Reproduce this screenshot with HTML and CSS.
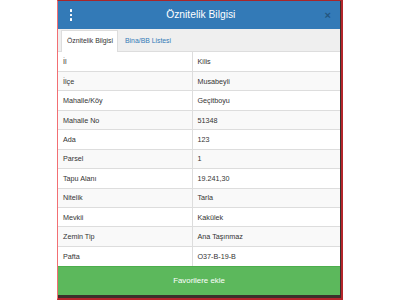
FILE: index.html
```html
<!DOCTYPE html>
<html lang="tr">
<head>
<meta charset="utf-8">
<title>Öznitelik Bilgisi</title>
<link rel="stylesheet" href="styles.css">
</head>
<body>
<div class="frame">
  <div class="modal">
    <div class="modal-header">
      <span class="kebab"><i></i><i></i><i></i></span>
      <h4 class="title">Öznitelik Bilgisi</h4>
      <span class="close">×</span>
    </div>
    <div class="tabs">
      <span class="tab active">Öznitelik Bilgisi</span>
      <span class="tab">Bina/BB Listesi</span>
    </div>
    <table class="attr">
      <tbody>
        <tr><td>İl</td><td>Kilis</td></tr>
        <tr><td>İlçe</td><td>Musabeyli</td></tr>
        <tr><td>Mahalle/Köy</td><td>Geçitboyu</td></tr>
        <tr><td>Mahalle No</td><td>51348</td></tr>
        <tr><td>Ada</td><td>123</td></tr>
        <tr><td>Parsel</td><td>1</td></tr>
        <tr><td>Tapu Alanı</td><td>19.241,30</td></tr>
        <tr><td>Nitelik</td><td>Tarla</td></tr>
        <tr><td>Mevkii</td><td>Kakülek</td></tr>
        <tr><td>Zemin Tip</td><td>Ana Taşınmaz</td></tr>
        <tr><td>Pafta</td><td>O37-B-19-B</td></tr>
      </tbody>
    </table>
    <div class="fav">Favorilere ekle</div>
  </div>
</div>
</body>
</html>
```

FILE: styles.css
```css
html, body {
  margin: 0;
  padding: 0;
  background: #ffffff;
}
body {
  font-family: "Liberation Sans", Arial, sans-serif;
  color: #333333;
}
.frame {
  margin-left: 57px;
  width: 286px;
  height: 300px;
  box-sizing: border-box;
  border-top: 1px solid #a8262a;
  border-right: 2px solid #b3262b;
  border-bottom: 2px solid #b3262b;
  border-left: 1px solid #f26f73;
  background: #3b302b;
}
.modal {
  width: 282px;
  background: #ffffff;
  display: flex;
  flex-direction: column;
}
.modal-header {
  height: 28px;
  background: #337ab7;
  display: flex;
  align-items: center;
  padding: 0 9px 0 12px;
  box-sizing: border-box;
}
.kebab {
  display: flex;
  flex-direction: column;
  gap: 2px;
  width: 3px;
}
.kebab i {
  display: block;
  width: 2.4px;
  height: 2.4px;
  background: #ffffff;
  border-radius: 0.5px;
}
.title {
  flex: 1;
  margin: 0;
  text-align: center;
  color: #ffffff;
  font-weight: normal;
  font-size: 10.3px;
  line-height: 12px;
  padding-left: 4px;
}
.close {
  color: #23567f;
  font-size: 11px;
  font-weight: bold;
  line-height: 10px;
}
.tabs {
  height: 23px;
  box-sizing: border-box;
  background: #efefef;
  border-bottom: 1px solid #dddddd;
  display: flex;
  align-items: flex-end;
  padding-left: 3px;
}
.tab {
  font-size: 6.85px;
  line-height: 8px;
  padding: 6px 4px 7px 5px;
  color: #337ab7;
  margin-bottom: -1px;
  border: 1px solid transparent;
  border-bottom: none;
}
.tab.active {
  background: #ffffff;
  color: #333333;
  border-color: #dddddd;
  padding-right: 4px;
  margin-right: 1px;
}
.attr {
  width: 282px;
  border-collapse: collapse;
  table-layout: fixed;
  font-size: 7.2px;
}
.attr td {
  height: 19.45px;
  box-sizing: border-box;
  padding: 0 5px;
  border-top: 1px solid #dddddd;
  border-left: 1px solid #dddddd;
  vertical-align: middle;
  line-height: 9px;
}
.attr tr:first-child td {
  border-top: none;
}
.attr td:first-child {
  width: 134px;
  border-left: none;
}
.attr tr:nth-child(even) td {
  background: #f9f9f9;
}
.fav {
  height: 29px;
  background: #5cb85c;
  color: #ffffff;
  font-size: 7.9px;
  display: flex;
  align-items: center;
  justify-content: center;
  border-top: 1px solid #4cae4c;
  box-sizing: border-box;
}
```
